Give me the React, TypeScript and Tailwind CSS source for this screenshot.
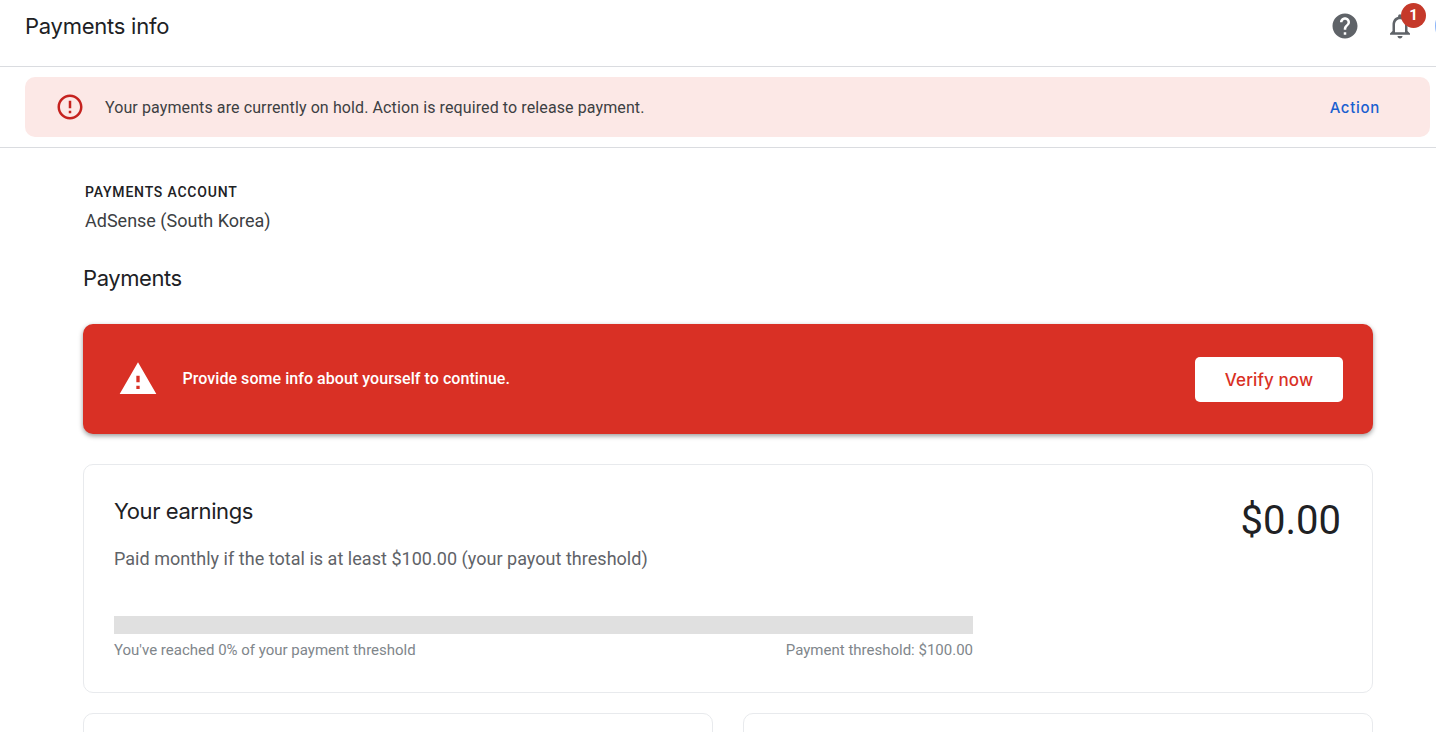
import type { ReactNode } from 'react';
import { MdErrorOutline, MdHelp, MdNotificationsNone, MdWarning } from 'react-icons/md';

function Heading({ children }: { children: ReactNode }) {
  return (
    <h2 className="font-['Inter',sans-serif] text-[22px] leading-7 font-[380] tracking-[-0.42px] text-[#202124]">
      {children}
    </h2>
  );
}

function TopBar() {
  return (
    <header className="flex h-[67px] items-start justify-between overflow-hidden border-b border-[#dadce0] pt-[11px] pl-[25px]">
      <h1 className="pt-px font-['Inter',sans-serif] text-[22px] leading-7 font-[380] tracking-[-0.25px] text-[#202124]">
        Payments info
      </h1>
      <div className="flex">
        <MdHelp className="mr-[25px] size-[30px] text-[#5f6368]" />
        <div className="relative mr-5">
          <MdNotificationsNone className="size-[30px] text-[#5f6368]" />
          <span className="absolute -top-2 left-4 flex size-[25px] items-center justify-center rounded-full bg-[#c5392a] text-[15px] font-bold text-white">
            1
          </span>
        </div>
        {/* account avatar, cut off by the window edge */}
        <div className="-mr-[39px] size-10 -translate-y-[5px] rounded-full border-2 border-[#8ab4f8]" />
      </div>
    </header>
  );
}

function HoldNotice() {
  return (
    <div className="flex h-[81px] border-b border-[#dadce0] pt-[10px] pr-[6px] pl-[25px]">
      <div className="flex h-[60px] flex-1 items-center rounded-[10px] bg-[#fce8e6] pr-[50px] pl-[30px]">
        <MdErrorOutline className="size-[30px] text-[#c5221f]" />
        <p className="ml-5 pt-[2px] text-[16px] tracking-[0.105px] text-[#3c4043]">
          Your payments are currently on hold. Action is required to release payment.
        </p>
        <a href="#" className="ml-auto pt-[2px] font-['Inter',sans-serif] text-[15px] font-medium tracking-[0.7px] text-[#1a5fd0]">
          Action
        </a>
      </div>
    </div>
  );
}

function VerifyBanner() {
  return (
    <div className="mt-8 flex h-[110px] items-center rounded-[10px] bg-[#d93025] pr-[30px] pl-[34.5px] text-white shadow-[0_2px_5px_rgba(0,0,0,0.4)]">
      <MdWarning className="size-10" />
      <p className="ml-[25px] text-[16px] font-medium tracking-[0.05px]">Provide some info about yourself to continue.</p>
      <button className="ml-auto h-[45px] w-[148px] rounded-[5px] bg-white pt-[3px] font-['Inter',sans-serif] text-[17px] font-medium tracking-[0.1px] text-[#d93025]">
        Verify now
      </button>
    </div>
  );
}

function EarningsCard() {
  return (
    <section className="mt-[30px] flex h-[229px] justify-between rounded-[10px] border border-[#e8eaed] pr-[31px] pl-[30px]">
      <div className="w-[859px] pt-8">
        <Heading>Your earnings</Heading>
        <p className="mt-[22px] text-[18px] leading-6 tracking-[0.03px] text-[#5f6368]">
          Paid monthly if the total is at least $100.00 (your payout threshold)
        </p>
        <div className="mt-[45px] h-[18px] bg-[#e0e0e0]" />
        <div className="mt-[6px] flex justify-between text-[15px] leading-5 text-[#80868b]">
          <span>You've reached 0% of your payment threshold</span>
          <span>Payment threshold: $100.00</span>
        </div>
      </div>
      <div className="pt-8 text-[40px] leading-[48px] text-[#202124]">$0.00</div>
    </section>
  );
}

export default function App() {
  return (
    <div className="h-[732px] overflow-hidden bg-white font-['Roboto',sans-serif]">
      <TopBar />
      <HoldNotice />
      <main className="pt-[34px] pr-[63px] pl-[83px]">
        <div className="pl-[2px]">
          <div className="text-[14px] leading-5 font-medium tracking-[0.8px] text-[#202124]">PAYMENTS ACCOUNT</div>
          <div className="mt-[7px] text-[18px] leading-6 text-[#3c4043]">AdSense (South Korea)</div>
        </div>
        <div className="mt-[31px]">
          <Heading>Payments</Heading>
        </div>
        <VerifyBanner />
        <EarningsCard />
        <div className="mt-5 grid grid-cols-2 gap-[30px]">
          <div className="h-[200px] rounded-[10px] border border-[#e8eaed]" />
          <div className="h-[200px] rounded-[10px] border border-[#e8eaed]" />
        </div>
      </main>
    </div>
  );
}
